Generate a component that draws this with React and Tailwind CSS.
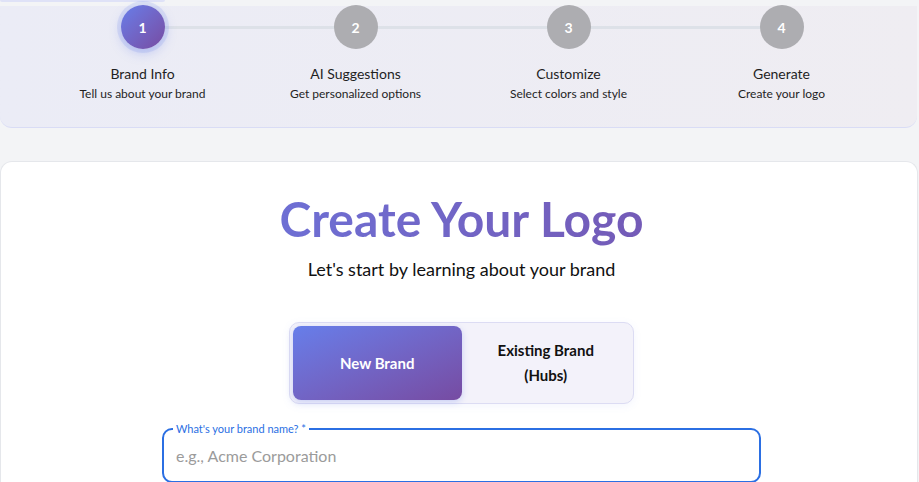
import React from "react";

const steps = [
  { n: 1, title: "Brand Info", sub: "Tell us about your brand" },
  { n: 2, title: "AI Suggestions", sub: "Get personalized options" },
  { n: 3, title: "Customize", sub: "Select colors and style" },
  { n: 4, title: "Generate", sub: "Create your logo" },
];

const Stepper = () => (
  <div className="relative mr-[2px] rounded-b-xl border-b border-[#d9dcf5] bg-gradient-to-r from-[#ebecf6] to-[#efedf2] pb-[25px]">
    {/* track behind the circles */}
    <div className="absolute left-[142px] right-[136px] top-[20px] h-[3px] bg-[#dde1e8]" />
    <div className="relative grid grid-cols-4 pl-[36px] pr-[29px]">
      {steps.map((s) => (
        <div key={s.n} className="flex flex-col items-center">
          <div
            className={
              s.n === 1
                ? "-mt-[1px] flex h-[44px] w-[44px] items-center justify-center rounded-full bg-gradient-to-br from-[#667eea] to-[#764ba2] text-[14px] font-bold text-white shadow-[0_0_0_4px_rgba(102,126,234,0.15),0_4px_12px_rgba(102,126,234,0.35)]"
                : "-mt-[1px] flex h-[44px] w-[44px] items-center justify-center rounded-full bg-[#adadb1] text-[14px] font-bold text-white"
            }
          >
            {s.n}
          </div>
          <div className="mt-[15px] text-[14px] leading-[20px] text-[#1f1f1f]">
            {s.title}
          </div>
          <div className="mt-[1px] text-[12px] leading-[17px] text-[#1f1f1f]">
            {s.sub}
          </div>
        </div>
      ))}
    </div>
  </div>
);

export default function App() {
  return (
    <div
      className="flex h-[482px] w-[919px] flex-col overflow-hidden bg-[#f3f4f6]"
      style={{ fontFamily: "Lato, 'Open Sans', sans-serif" }}
    >
      <div className="h-[6px] shrink-0">
        <div className="h-[2px] w-[165px] rounded-b bg-[#dfe2f7]" />
      </div>
      <Stepper />

      <div className="mr-[1px] mt-[33px] flex-1 shrink-0 rounded-t-xl border border-b-0 border-[#e5e7eb] bg-white pt-[29px]">
        <div className="flex flex-col items-center pl-[5px]">
          <h1 className="w-full bg-gradient-to-r from-[#667eea] to-[#764ba2] bg-clip-text text-center text-[48px] font-bold leading-[56px] text-transparent">
            Create Your Logo
          </h1>
          <p className="mt-[9px] text-[18px] leading-[26px] text-[#111]">
            Let's start by learning about your brand
          </p>

          <div className="mt-[40px] flex h-[82px] w-[345px] shrink-0 rounded-[10px] border border-[#dcdcf3] bg-[#f3f2fa] p-[3px] shadow-[0_2px_8px_rgba(102,126,234,0.08)]">
            <button className="flex flex-1 items-center justify-center rounded-[8px] bg-gradient-to-br from-[#667eea] to-[#764ba2] text-[15px] font-bold text-white shadow-[0_2px_6px_rgba(102,126,234,0.3)]">
              New Brand
            </button>
            <button className="flex flex-1 items-center justify-center text-center text-[15px] font-bold leading-[25px] text-[#111]">
              Existing Brand
              <br />
              (Hubs)
            </button>
          </div>

          <fieldset className="relative mt-[19px] h-[60px] w-[599px] shrink-0 rounded-[10px] border-2 border-[#2b6fe3] px-[9px]">
            <legend className="px-[3px] text-[11px] leading-[12px] text-[#2b6fe3]">
              What's your brand name? *
            </legend>
            <input
              autoFocus
              placeholder="e.g., Acme Corporation"
              className="mt-[9px] w-full bg-transparent px-[3px] text-[16px] text-[#111] caret-black outline-none placeholder:text-[#9b9b9b]"
            />
          </fieldset>
        </div>
      </div>
    </div>
  );
}
